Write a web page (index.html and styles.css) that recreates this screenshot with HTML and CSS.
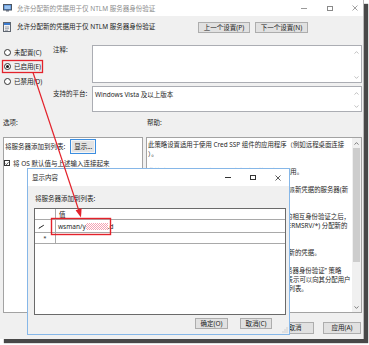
FILE: index.html
```html
<!DOCTYPE html>
<html lang="zh-CN">
<head>
<meta charset="utf-8">
<title>允许分配新的凭据用于仅 NTLM 服务器身份验证</title>
<link rel="stylesheet" href="styles.css">
</head>
<body>
<div class="stage">
  <div class="win">
    <div class="titlebar">
      <svg class="ticon" width="9" height="8" viewBox="0 0 9 8"><rect x="0.5" y="0.5" width="8" height="5.5" fill="#4a86d4" stroke="#4b5563"/><rect x="1.5" y="1.5" width="6" height="3.5" fill="#9cc4f0"/><rect x="3" y="6" width="3" height="1.5" fill="#6b7280"/></svg>
      <span class="ttext">允许分配新的凭据用于仅 NTLM 服务器身份验证</span>
      <div class="controls">
        <span class="c-min"></span>
        <span class="c-max"></span>
        <svg class="c-close" width="6" height="6" viewBox="0 0 6 6"><path d="M0.5 0.5 L5.5 5.5 M5.5 0.5 L0.5 5.5" stroke="#8a8a8a" stroke-width="0.8"/></svg>
      </div>
    </div>
    <div class="header">
      <svg class="hicon" width="8" height="10" viewBox="0 0 8 10"><rect x="0.5" y="0.5" width="7" height="9" fill="#f2f2f2" stroke="#5f6670"/><rect x="1" y="1" width="6" height="2" fill="#3b7bd0"/><path d="M2 5 H6 M2 6.7 H6 M2 8.3 H5" stroke="#7a8290" stroke-width="0.7"/></svg>
      <span class="htext">允许分配新的凭据用于仅 NTLM 服务器身份验证</span>
      <div class="navbtns">
        <button class="btn nav1">上一个设置(P)</button>
        <button class="btn nav2">下一个设置(N)</button>
      </div>
    </div>
    <div class="top">
      <div class="radios">
        <div class="radio"><span class="dot"></span>未配置(C)</div>
        <div class="radio"><span class="dot on"></span>已启用(E)</div>
        <div class="radio"><span class="dot"></span>已禁用(D)</div>
      </div>
      <div class="fields">
        <div class="flabel">注释:</div>
        <div class="box comment">
          <div class="boxtext"></div>
          <div class="mini-sb">
            <svg width="5" height="3" viewBox="0 0 5 3"><polyline points="0.5,2.6 2.5,0.6 4.5,2.6" fill="none" stroke="#a6a6a6" stroke-width="0.7"/></svg>
            <svg width="5" height="3" viewBox="0 0 5 3"><polyline points="0.5,0.4 2.5,2.4 4.5,0.4" fill="none" stroke="#a6a6a6" stroke-width="0.7"/></svg>
          </div>
        </div>
        <div class="flabel second">支持的平台:</div>
        <div class="box platform">
          <div class="boxtext">Windows Vista 及以上版本</div>
          <div class="mini-sb">
            <svg width="5" height="3" viewBox="0 0 5 3"><polyline points="0.5,2.6 2.5,0.6 4.5,2.6" fill="none" stroke="#a6a6a6" stroke-width="0.7"/></svg>
            <svg width="5" height="3" viewBox="0 0 5 3"><polyline points="0.5,0.4 2.5,2.4 4.5,0.4" fill="none" stroke="#a6a6a6" stroke-width="0.7"/></svg>
          </div>
        </div>
      </div>
    </div>
    <div class="panes">
      <div class="plabel">选项:</div>
      <div class="plabel help-label">帮助:</div>
      <div class="pane options">
        <div class="orow">
          <span>将服务器添加到列表:</span>
          <button class="btn showbtn">显示...</button>
        </div>
        <div class="orow2">
          <span class="check"><svg width="5" height="5" viewBox="0 0 5 5"><polyline points="0.6,2.5 1.9,3.9 4.4,0.9" fill="none" stroke="#222" stroke-width="0.9"/></svg></span>
          <span>将 OS 默认值与上述输入连接起来</span>
        </div>
      </div>
      <div class="pane help">
        <div class="helptext">
          <div class="hl">此策略设置适用于使用 Cred SSP 组件的应用程序（例如远程桌面连接</div>
          <div class="hl">）。</div>
          <div class="hl"></div>
          <div class="hl">此策略设置适用于通过 NTLM 身份验证的服务器调用。</div>
          <div class="hl"></div>
          <div class="hl">如果启用此策略设置，你可以指定应用程序向其委派新凭据的服务器(新</div>
          <div class="hl">凭据是指首次运行时提示输入的凭据)。</div>
          <div class="hl"></div>
          <div class="hl">如果未配置此策略设置(默认设置)，则在经过适当的相互身份验证之后，</div>
          <div class="hl">允许向运行在任何计算机上的远程桌面会话主机(TERMSRV/*) 分配新的</div>
          <div class="hl">凭据。</div>
          <div class="hl"></div>
          <div class="hl">如果禁用此策略设置，则不允许向任何计算机分配新的凭据。</div>
          <div class="hl"></div>
          <div class="hl">注意：可以将“允许分配新的凭据用于仅 NTLM 服务器身份验证” 策略</div>
          <div class="hl">可设置为一个或多个服务器主体名称(SPN)。SPN 表示可以向其分配用户</div>
          <div class="hl">凭据的目标服务器。可以使用通配符来指定服务器列表。</div>
        </div>
        <div class="sb">
          <div class="sb-arrow"><svg width="5" height="3" viewBox="0 0 5 3"><polyline points="0.5,2.6 2.5,0.6 4.5,2.6" fill="none" stroke="#606060" stroke-width="0.8"/></svg></div>
          <div class="sb-thumb"></div>
          <div class="sb-track"></div>
          <div class="sb-arrow"><svg width="5" height="3" viewBox="0 0 5 3"><polyline points="0.5,0.4 2.5,2.4 4.5,0.4" fill="none" stroke="#606060" stroke-width="0.8"/></svg></div>
        </div>
      </div>
    </div>
    <div class="footer">
      <button class="btn fbtn">确定</button>
      <button class="btn fbtn">取消</button>
      <button class="btn fbtn">应用(A)</button>
    </div>
  </div>

  <div class="dialog">
    <div class="dtitle">
      <span>显示内容</span>
      <div class="controls dcontrols">
        <span class="c-min"></span>
        <span class="c-max"></span>
        <svg class="c-close" width="6" height="6" viewBox="0 0 6 6"><path d="M0.5 0.5 L5.5 5.5 M5.5 0.5 L0.5 5.5" stroke="#333" stroke-width="0.8"/></svg>
      </div>
    </div>
    <div class="dbody">
      <div class="dlabel">将服务器添加到列表:</div>
      <div class="grid">
        <div class="grow ghead"><div class="rh"></div><div class="gv">值</div></div>
        <div class="grow gr1">
          <div class="rh"><svg width="7" height="5" viewBox="0 0 7 5"><path d="M0.8 4.3 L5.8 1.2" stroke="#222" stroke-width="1"/><path d="M0.5 4.6 L1.6 3.4 L1.9 4.1 Z" fill="#222"/></svg></div>
          <div class="gv">wsman/y<span class="redact"></span>.d</div>
        </div>
        <div class="grow gr2"><div class="rh">*</div><div class="gv"></div></div>
      </div>
      <div class="dfoot">
        <button class="btn dbtn ok">确定(O)</button>
        <button class="btn dbtn">取消(C)</button>
      </div>
    </div>
    <svg class="grip" width="6" height="6" viewBox="0 0 6 6"><g fill="#b0b0b0"><rect x="4.5" y="0.5" width="1" height="1"/><rect x="2.5" y="2.5" width="1" height="1"/><rect x="4.5" y="2.5" width="1" height="1"/><rect x="0.5" y="4.5" width="1" height="1"/><rect x="2.5" y="4.5" width="1" height="1"/><rect x="4.5" y="4.5" width="1" height="1"/></g></svg>
  </div>

  <svg class="annot" width="369" height="345" viewBox="0 0 369 345">
    <rect x="2.5" y="60.5" width="40" height="12" fill="none" stroke="#e3222b" stroke-width="1.3"/>
    <line x1="33" y1="72.5" x2="79" y2="211" stroke="#e3222b" stroke-width="1.2"/>
    <polygon points="81,217.5 81.6,208.3 75.6,210.3" fill="#e3222b"/>
    <rect x="51.5" y="218.5" width="59" height="16" fill="none" stroke="#e3222b" stroke-width="1.4"/>
  </svg>
</div>
</body>
</html>
```

FILE: styles.css
```css
* { box-sizing: border-box; }
html, body { margin: 0; padding: 0; background: #fff; }
body {
  width: 369px;
  height: 345px;
  overflow: hidden;
  font-family: "Noto Sans", "Noto Sans CJK SC", sans-serif;
  font-size: 6.5px;
  line-height: 9px;
  color: #1e1e1e;
}
.stage { position: relative; width: 369px; height: 345px; }

.win {
  width: 364px;
  height: 339px;
  background: #f0f0f0;
  border-right: 1px solid #b8b8b8;
  box-shadow: 4px 4px 1px rgba(40, 40, 40, 0.85);
  display: flex;
  flex-direction: column;
}

/* title bar */
.titlebar {
  height: 16px;
  background: #fff;
  display: flex;
  align-items: center;
  padding-left: 3px;
  flex: none;
}
.ticon { margin-right: 5px; flex: none; }
.ttext { color: #8c8c8c; white-space: nowrap; }
.controls {
  margin-left: auto;
  display: flex;
  align-items: center;
  gap: 19.5px;
  padding-right: 5px;
}
.c-min { width: 6px; height: 1px; background: #9a9a9a; }
.c-max { width: 6px; height: 5px; border: 1px solid #8a8a8a; }
.c-close { display: block; }

/* header */
.header {
  height: 20px;
  display: flex;
  align-items: center;
  padding: 1px 0 0 3px;
  flex: none;
}
.hicon { margin-right: 6px; flex: none; }
.htext { white-space: nowrap; color: #1a1a1a; }
.navbtns {
  margin-left: auto;
  align-self: flex-end;
  margin-bottom: 3px;
  display: flex;
  gap: 5px;
  padding-right: 55px;
}
.btn {
  font: inherit;
  color: #1a1a1a;
  background: #e1e1e1;
  border: 1px solid #adadad;
  padding: 0;
  margin: 0;
  line-height: 8px;
  white-space: nowrap;
}
.nav1 { width: 52px; height: 11px; }
.nav2 { width: 53px; height: 11px; }

/* top block */
.top {
  display: flex;
  padding: 9px 0 0 3px;
  flex: none;
}
.radios {
  width: 50px;
  display: flex;
  flex-direction: column;
  gap: 4.5px;
  padding-top: 2px;
}
.radio {
  display: flex;
  align-items: center;
  gap: 3px;
  height: 10px;
  padding-left: 1px;
  white-space: nowrap;
}
.dot {
  width: 7px;
  height: 7px;
  border: 1px solid #333;
  border-radius: 50%;
  background: #fff;
  position: relative;
  flex: none;
}
.dot.on::after {
  content: "";
  position: absolute;
  left: 1px; top: 1px; right: 1px; bottom: 1px;
  border-radius: 50%;
  background: #1a1a1a;
}
.fields {
  display: grid;
  grid-template-columns: 39px 270px;
  grid-template-rows: 38px 26px;
  row-gap: 3px;
}
.flabel { white-space: nowrap; }
.flabel.second { padding-top: 2.5px; }
.box {
  background: #fff;
  border: 1px solid #abadb3;
  display: flex;
}
.boxtext { flex: 1; padding: 3px 0 0 2px; white-space: nowrap; }
.platform .boxtext { padding-top: 2.5px; }
.mini-sb {
  width: 9px;
  display: flex;
  flex-direction: column;
  justify-content: space-between;
  align-items: center;
  padding: 5px 0 3px;
}
.mini-sb svg { display: block; }

/* panes */
.panes {
  display: grid;
  grid-template-columns: 140px 216px;
  grid-template-rows: 10px 176px;
  column-gap: 3px;
  row-gap: 9px;
  padding-left: 3px;
  margin-top: 6px;
  flex: none;
}
.plabel { line-height: 10px; }
.help-label { padding-left: 1px; }
.pane { background: #fff; border: 1px solid #a3a3a3; }
.options { padding: 1px 0 0 0; }
.orow {
  display: flex;
  align-items: center;
  gap: 5px;
  height: 15px;
  padding-left: 1px;
  white-space: nowrap;
}
.showbtn {
  width: 26px;
  height: 15px;
  border: 1px solid #3c8ee0;
  background: #e3e3e3;
  box-shadow: inset 0 0 0 1px #f6f6f6;
}
.orow2 {
  display: flex;
  align-items: center;
  gap: 3px;
  height: 9px;
  margin-top: 4.5px;
  white-space: nowrap;
}
.check {
  width: 6px;
  height: 6px;
  border: 1px solid #333;
  background: #fff;
  display: flex;
  align-items: center;
  justify-content: center;
  flex: none;
}
.check svg { display: block; }

.help { display: flex; overflow: hidden; }
.helptext { flex: 1; padding: 1.5px 0 0 1px; overflow: hidden; font-size: 6.4px; }
.hl { height: 9px; white-space: nowrap; overflow: hidden; }
.sb {
  width: 9px;
  display: flex;
  flex-direction: column;
  background: #f0f0f0;
  flex: none;
}
.sb-arrow {
  height: 10px;
  display: flex;
  align-items: center;
  justify-content: center;
}
.sb-arrow svg { display: block; }
.sb-thumb { height: 114px; background: #cdcdcd; margin: 0 1px; }
.sb-track { flex: 1; }

.footer {
  display: flex;
  justify-content: flex-end;
  gap: 9px;
  padding: 9px 2px 0 0;
}
.fbtn { width: 38px; height: 12px; }

/* dialog window (floating on top) */
.dialog {
  position: absolute;
  left: 27px;
  top: 168px;
  width: 263px;
  height: 167px;
  border: 1px solid #86b7e8;
  background: #f0f0f0;
  display: flex;
  flex-direction: column;
}
.dtitle {
  height: 17px;
  background: #fff;
  display: flex;
  align-items: center;
  padding-left: 4px;
  flex: none;
}
.dcontrols { gap: 19px; padding-right: 8px; }
.dcontrols .c-min { background: #333; }
.dcontrols .c-max { border-color: #333; }
.dbody {
  flex: 1;
  display: flex;
  flex-direction: column;
  padding: 7.5px 3px 0 6px;
}
.dlabel { padding-left: 1px; white-space: nowrap; }
.grid {
  margin-top: 5.5px;
  height: 107px;
  border: 1px solid #6a6a6a;
  background: #fff;
  flex: none;
}
.grow {
  display: grid;
  grid-template-columns: 21px 1fr;
  border-bottom: 1px solid #a9a9a9;
}
.rh {
  border-right: 1px solid #a9a9a9;
  display: flex;
  align-items: center;
  justify-content: center;
}
.gv { padding-left: 2px; display: flex; align-items: center; white-space: nowrap; }
.ghead { height: 11px; }
.ghead .gv { padding-left: 3px; }
.gr1 { height: 13px; }
.gr1 .rh { justify-content: flex-start; padding-left: 3px; }
.gr1 .rh svg { display: block; }
.gr2 { height: 11px; }
.gr2 .rh { font-size: 6px; padding-top: 1px; }
.redact {
  display: inline-block;
  width: 22px;
  height: 7px;
  background: repeating-conic-gradient(#f4a3b3 0 25%, #fff 0 50%) 0 0 / 2px 2px;
}
.dfoot {
  display: flex;
  justify-content: flex-end;
  gap: 12px;
  padding-right: 14px;
  margin-top: 3px;
}
.dbtn { width: 32px; height: 11px; }
.dbtn.ok { width: 33px; }
.grip { position: absolute; right: 1px; bottom: 1px; }

/* annotation overlay */
.annot { position: absolute; left: 0; top: 0; pointer-events: none; }
```
